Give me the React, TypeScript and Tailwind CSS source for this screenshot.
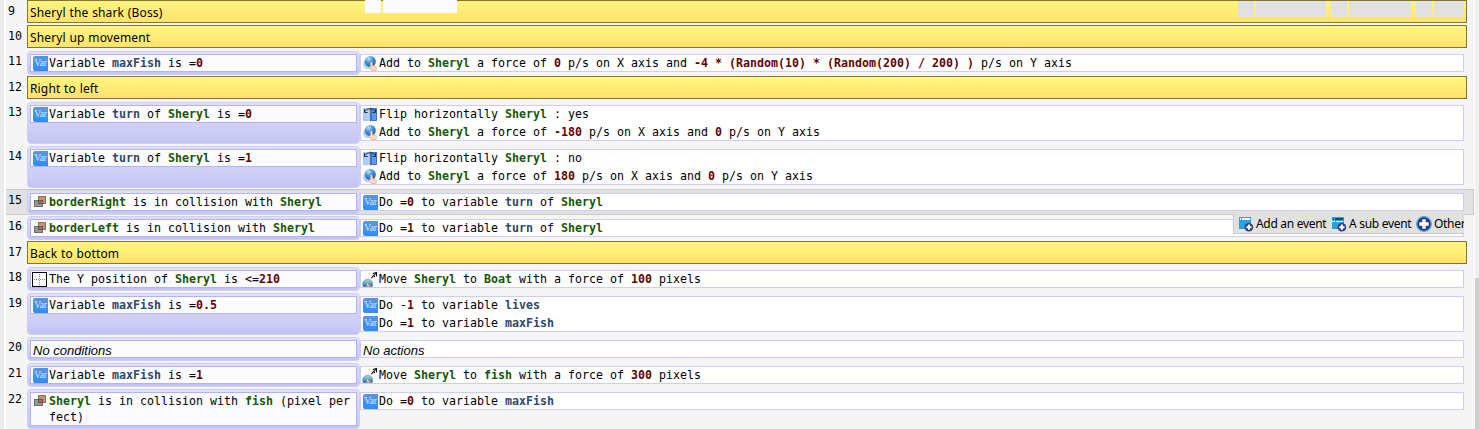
import React from 'react';

type Tone = 'object' | 'variable' | 'value';
type Part = string | [Tone, string];
type IconName = 'var' | 'force' | 'flip' | 'collision' | 'position' | 'move' | 'none';
type Line = { icon: IconName; parts: Part[] };
type Row =
  | { kind: 'comment'; n: number; text: string }
  | { kind: 'event'; n: number; conditions: Line[]; actions: Line[]; height: string; selected?: boolean };

const tones: Record<Tone, string> = {
  object: 'font-bold text-[#195605]',
  variable: 'font-bold text-[#2f4868]',
  value: 'font-bold text-[#5f0505]',
};

const o = (t: string): Part => ['object', t];
const v = (t: string): Part => ['variable', t];
const x = (t: string): Part => ['value', t];

const H1 = 'h-[26px]';
const H2 = 'h-[44px]';
const H3 = 'h-[42px]';

const rows: Row[] = [
  { kind: 'comment', n: 9, text: 'Sheryl the shark (Boss)' },
  { kind: 'comment', n: 10, text: 'Sheryl up movement' },
  {
    kind: 'event', n: 11, height: H1,
    conditions: [{ icon: 'var', parts: ['Variable ', v('maxFish'), ' is =', x('0')] }],
    actions: [{ icon: 'force', parts: ['Add to ', o('Sheryl'), ' a force of ', x('0'), ' p/s on X axis and ', x('-4 * (Random(10) * (Random(200) / 200) )'), ' p/s on Y axis'] }],
  },
  { kind: 'comment', n: 12, text: 'Right to left' },
  {
    kind: 'event', n: 13, height: H2,
    conditions: [{ icon: 'var', parts: ['Variable ', v('turn'), ' of ', o('Sheryl'), ' is =', x('0')] }],
    actions: [
      { icon: 'flip', parts: ['Flip horizontally ', o('Sheryl'), ' : yes'] },
      { icon: 'force', parts: ['Add to ', o('Sheryl'), ' a force of ', x('-180'), ' p/s on X axis and ', x('0'), ' p/s on Y axis'] },
    ],
  },
  {
    kind: 'event', n: 14, height: H2,
    conditions: [{ icon: 'var', parts: ['Variable ', v('turn'), ' of ', o('Sheryl'), ' is =', x('1')] }],
    actions: [
      { icon: 'flip', parts: ['Flip horizontally ', o('Sheryl'), ' : no'] },
      { icon: 'force', parts: ['Add to ', o('Sheryl'), ' a force of ', x('180'), ' p/s on X axis and ', x('0'), ' p/s on Y axis'] },
    ],
  },
  {
    kind: 'event', n: 15, height: H1, selected: true,
    conditions: [{ icon: 'collision', parts: [o('borderRight'), ' is in collision with ', o('Sheryl')] }],
    actions: [{ icon: 'var', parts: ['Do =', x('0'), ' to variable ', v('turn'), ' of ', o('Sheryl')] }],
  },
  {
    kind: 'event', n: 16, height: H1,
    conditions: [{ icon: 'collision', parts: [o('borderLeft'), ' is in collision with ', o('Sheryl')] }],
    actions: [{ icon: 'var', parts: ['Do =', x('1'), ' to variable ', v('turn'), ' of ', o('Sheryl')] }],
  },
  { kind: 'comment', n: 17, text: 'Back to bottom' },
  {
    kind: 'event', n: 18, height: H1,
    conditions: [{ icon: 'position', parts: ['The Y position of ', o('Sheryl'), ' is <=', x('210')] }],
    actions: [{ icon: 'move', parts: ['Move ', o('Sheryl'), ' to ', o('Boat'), ' with a force of ', x('100'), ' pixels'] }],
  },
  {
    kind: 'event', n: 19, height: H2,
    conditions: [{ icon: 'var', parts: ['Variable ', v('maxFish'), ' is =', x('0.5')] }],
    actions: [
      { icon: 'var', parts: ['Do -', x('1'), ' to variable ', v('lives')] },
      { icon: 'var', parts: ['Do =', x('1'), ' to variable ', v('maxFish')] },
    ],
  },
  { kind: 'event', n: 20, height: H1, conditions: [], actions: [] },
  {
    kind: 'event', n: 21, height: H1,
    conditions: [{ icon: 'var', parts: ['Variable ', v('maxFish'), ' is =', x('1')] }],
    actions: [{ icon: 'move', parts: ['Move ', o('Sheryl'), ' to ', o('fish'), ' with a force of ', x('300'), ' pixels'] }],
  },
  {
    kind: 'event', n: 22, height: H3,
    conditions: [
      { icon: 'collision', parts: [o('Sheryl'), ' is in collision with ', o('fish'), ' (pixel per'] },
      { icon: 'none', parts: ['fect)'] },
    ],
    actions: [{ icon: 'var', parts: ['Do =', x('0'), ' to variable ', v('maxFish')] }],
  },
];

function Icon({ name }: { name: IconName }) {
  const cls = 'block h-4 w-4 shrink-0';
  switch (name) {
    case 'none':
      return <span className={cls} />;
    case 'var':
      return (
        <span className="mt-px flex h-[15px] w-4 shrink-0 pl-px">
          <span className="flex h-[15px] w-[15px] items-center justify-center rounded-l-xs bg-linear-to-b from-[#5a97d8] to-[#2f8bfa] font-['Liberation_Serif',serif] text-[9.5px] leading-none tracking-[-0.2px] text-[#d5e8ff]">
            Var
          </span>
        </span>
      );
    case 'force':
      return (
        <svg className={cls} viewBox="0 0 16 16">
          <defs>
            <radialGradient id="ball" cx="0.35" cy="0.25" r="0.8">
              <stop offset="0" stopColor="#c4e4fc" />
              <stop offset="0.4" stopColor="#4d9be0" />
              <stop offset="1" stopColor="#1c5ca8" />
            </radialGradient>
          </defs>
          <circle cx="6.200" cy="9" r="5.200" fill="#b4d0ea" />
          <circle cx="8.300" cy="6.500" r="5.500" fill="url(#ball)" />
          <path d="M8.400 7.600c.1-1.100 1.700-1.100 1.800 0l.3 3 2.500.5c1.200.3 1.500.9 1.400 1.900l-.4 2.700H9.300l-2-3c-.5-1 .4-1.500 1.200-.8z" fill="#ffdcc0" stroke="#d99c78" strokeWidth=".6" />
        </svg>
      );
    case 'flip':
      return (
        <svg className={cls} viewBox="0 0 16 16">
          <path d="M1.500 2.500h6v12h-6z" fill="#b0cdfb" stroke="#a4c2f2" />
          <path d="M9.500 2.500h5v12h-5z" fill="#5f99fb" stroke="#3c6dc0" />
          <path d="M8.500 1.500v14" stroke="#5b6f94" />
          <path d="M2.500 6C3.500 4 5.500 2.800 8 2.800S12.500 4 13.500 6" fill="none" stroke="#26303f" />
          <path d="M2.500 3.200V6.500H5.600M13.500 3.200V6.500H10.600" fill="none" stroke="#26303f" />
        </svg>
      );
    case 'collision':
      return (
        <svg className={cls} viewBox="0 0 16 16" shapeRendering="crispEdges">
          <path d="M6.500 2.500h7v7h-7z" fill="#b99577" stroke="#8d6e58" />
          <path d="M2.500 6.500h8v6h-8z" fill="#979797" stroke="#6d6d6d" />
          <path d="M6.500 6.500h4v3h-4z" fill="#9d7464" stroke="#6f5148" />
        </svg>
      );
    case 'position':
      return (
        <svg className={cls} viewBox="0 0 16 16" shapeRendering="crispEdges">
          <path d="M.5 1.500h14v14H.5z" fill="#fff" stroke="#000" />
          <path d="M7.500 3v11M2 8.500h12" stroke="#888" strokeDasharray="1 1" />
        </svg>
      );
    case 'move':
      return (
        <svg className={cls} viewBox="0 0 16 16">
          <defs>
            <linearGradient id="globe" x1="0" y1="0" x2="0" y2="1">
              <stop offset="0" stopColor="#b8d9ed" />
              <stop offset="1" stopColor="#176eb5" />
            </linearGradient>
          </defs>
          <path d="M1.200 15.800c-1.500-3.800.5-7.500 4.500-7.500s6 3.700 4.500 7.500z" fill="url(#globe)" stroke="#4984ad" strokeWidth=".6" />
          <path d="M4.800 15.800v-3.600c0-1.200 1.700-1.200 1.700 0v1.600l1.700.6v1.400z" fill="#f4c6a8" stroke="#a8745e" strokeWidth=".5" />
          <path d="M9.300 7.300l4.700-5.300M10.800 2.500l3.700-1v4M11 4l2 1.800" fill="none" stroke="#111" strokeWidth="1.100" />
        </svg>
      );
  }
}

function Lines({ lines, empty, tight }: { lines: Line[]; empty: string; tight?: boolean }) {
  if (lines.length === 0) {
    return (
      <div className="pl-px font-['Liberation_Sans',sans-serif] text-[13px] leading-[19px] text-black italic">{empty}</div>
    );
  }
  return (
    <>
      {lines.map((line, i) => (
        <div key={i} className={`flex items-start ${tight ? 'h-4' : 'h-[18px]'}`}>
          <Icon name={line.icon} />
          <span className="pl-px font-['DejaVu_Sans_Mono',monospace] text-[11.63px] leading-4 whitespace-pre text-black">
            {line.parts.map((p, j) =>
              typeof p === 'string' ? p : <span key={j} className={tones[p[0]]}>{p[1]}</span>,
            )}
          </span>
        </div>
      ))}
    </>
  );
}

function RowNumber({ n }: { n: number }) {
  return (
    <div className="w-[21px] shrink-0 pt-[3px] pl-[2px] font-['DejaVu_Sans_Mono',monospace] text-[11.63px] leading-4 text-black">{n}</div>
  );
}

function CommentRow({ n, text }: { n: number; text: string }) {
  return (
    <div className="flex h-[25px] shrink-0">
      <RowNumber n={n} />
      <div className="h-[23px] w-[1440px] border border-[#867434] bg-linear-to-b from-[#fff780] to-[#ffe26b] pl-[2px] font-['Noto_Sans',sans-serif] text-[12px] leading-[23px] tracking-[0.15px] [word-spacing:0.4px] whitespace-pre text-black">
        {text}
      </div>
    </div>
  );
}

function EventRow({ row }: { row: Extract<Row, { kind: 'event' }> }) {
  const wrapped = row.conditions.length > 1;
  return (
    <div className={`${row.height} flex w-[1468px] shrink-0 ${row.selected ? 'bg-[#e1e1e1] shadow-[inset_0_1px_#cccccc,inset_0_-1px_#cccccc,inset_-1px_0_#cccccc]' : ''}`}>
      <RowNumber n={row.n} />
      <div className="flex w-[1437px] items-start pt-px">
        <div className="w-[333px] shrink-0 self-stretch pb-px">
          <div className="h-full rounded-[4px] border border-[#cfcff6] bg-linear-to-b from-[#e0e0f6] to-[#c4c4f5] p-[2px]">
            <div className="border border-[#b3b3f4] bg-[#fcfcff] pl-px">
              <div className={wrapped ? 'h-8' : 'h-4'}>
                <Lines lines={row.conditions} empty="No conditions" tight={wrapped} />
              </div>
            </div>
          </div>
        </div>
        <div className="mt-[3px] w-[1104px] border border-[#cecef5] bg-white pl-px">
          <div className={row.actions.length > 1 ? 'h-[34px]' : 'h-4'}>
            <Lines lines={row.actions} empty="No actions" />
          </div>
        </div>
      </div>
    </div>
  );
}

function WindowPlusIcon({ sub }: { sub?: boolean }) {
  return (
    <svg className="h-4 w-4 shrink-0" viewBox="0 0 16 16">
      <path d="M1 1h12v12H1z" fill="#2da3d5" />
      <path d="M2 2h10v2H2z" fill={sub ? '#2f3e8e' : '#fff'} />
      <path d="M3.500 2v2" stroke="#42b4e4" />
      {sub && <path d="M1 5.500h3M5 5.500h7" stroke="#dff4ff" />}
      <circle cx="10.900" cy="11.200" r="4.300" fill="#303b86" />
      <path d="M10.900 8.600v5.200M8.300 11.200h5.200" stroke="#fff" strokeWidth="2" />
    </svg>
  );
}

function Toolbar() {
  return (
    <div className="absolute top-[214px] left-[1233px] flex h-5 w-[231px] items-center overflow-hidden border-b border-l border-[#cccccc] bg-[#e1e1e1] pl-1 font-['Noto_Sans',sans-serif] text-[12px] leading-5 tracking-[-0.3px] whitespace-nowrap text-black">
      <WindowPlusIcon />
      <span className="ml-[2px] w-[75px] shrink-0">Add an event</span>
      <WindowPlusIcon sub />
      <span className="ml-[2px] w-[67px] shrink-0">A sub event</span>
      <svg className="h-4 w-4 shrink-0" viewBox="0 0 16 16">
        <circle cx="8" cy="8" r="7.300" fill="#303b86" stroke="#4aa5cf" strokeWidth="1.200" />
        <path d="M8 3.300v9.400M3.300 8h9.400" stroke="#fff" strokeWidth="3.400" />
      </svg>
      <span className="ml-[2px] shrink-0">Other</span>
    </div>
  );
}

export default function App() {
  return (
    <div className="relative flex h-[429px] w-[1479px] overflow-hidden bg-[#f5f5f5]">
      <div className="w-[6px] shrink-0 border-r-2 border-white bg-[#ececec]" />
      <div className="flex w-[1468px] shrink-0 flex-col">
        {rows.map((row) =>
          row.kind === 'comment' ? <CommentRow key={row.n} n={row.n} text={row.text} /> : <EventRow key={row.n} row={row} />,
        )}
      </div>
      <div className="w-[5px] shrink-0 border-l border-white bg-[#f0f0f0] pt-[278px]">
        <div className="h-[151px] bg-[#cdcdcd]" />
      </div>
      <div className="absolute top-0 left-[365px] flex h-[13px] gap-[2px]">
        <div className="w-4 bg-[#fcfcff]" />
        <div className="w-[74px] bg-[#fcfcff]" />
      </div>
      <div className="absolute top-px left-[1238px] flex h-4">
        <div className="w-4 bg-[#e1e1e1]" />
        <div className="ml-[2px] w-[70px] bg-[#e1e1e1]" />
        <div className="ml-[5px] w-4 bg-[#e1e1e1]" />
        <div className="ml-[2px] w-[62px] bg-[#e1e1e1]" />
        <div className="ml-[5px] w-4 bg-[#e1e1e1]" />
        <div className="ml-[2px] w-[30px] bg-[#e1e1e1]" />
      </div>
      <Toolbar />
    </div>
  );
}
